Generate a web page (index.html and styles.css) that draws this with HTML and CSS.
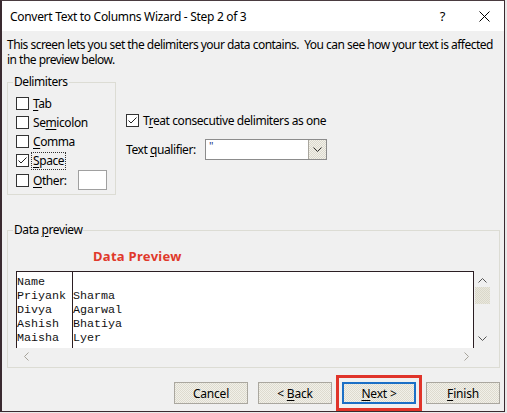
FILE: index.html
```html
<!DOCTYPE html>
<html>
<head>
<meta charset="utf-8">
<link rel="stylesheet" href="styles.css">
</head>
<body>
<div class="window">
  <div class="titlebar">
    <span class="title">Convert Text to Columns Wizard - Step 2 of 3</span>
    <span class="help">?</span>
    <svg class="close" width="11" height="11" viewBox="0 0 11 11"><path d="M0.5 0.5 L10.5 10.5 M10.5 0.5 L0.5 10.5" stroke="#000" stroke-width="1" fill="none"/></svg>
  </div>
  <div class="content">
    <div class="intro">
      <div>This screen lets you set the delimiters your data contains.&nbsp; You can see how your text is affected</div>
      <div>in the preview below.</div>
    </div>
    <div class="top-row">
      <fieldset class="group delims">
        <legend>Delimiters</legend>
        <div class="cb-row"><span class="box"></span><span><u>T</u>ab</span></div>
        <div class="cb-row"><span class="box"></span><span>Se<u>m</u>icolon</span></div>
        <div class="cb-row"><span class="box"></span><span><u>C</u>omma</span></div>
        <div class="cb-row"><span class="box"><svg width="11" height="11" viewBox="0 0 11 11"><path d="M1.5 5.5 L4 8 L9.5 2.5" stroke="#222" fill="none"/></svg></span><span class="focus"><u>S</u>pace</span></div>
        <div class="cb-row other"><span class="box"></span><span><u>O</u>ther:</span><span class="textbox"></span></div>
      </fieldset>
      <div class="options">
        <div class="cb-row"><span class="box"><svg width="11" height="11" viewBox="0 0 11 11"><path d="M1.5 5.5 L4 8 L9.5 2.5" stroke="#222" fill="none"/></svg></span><span>T<u>r</u>eat consecutive delimiters as one</span></div>
        <div class="qual-row">
          <span class="qual-label">Text <u>q</u>ualifier:</span>
          <div class="combo">
            <span class="combo-value">"</span>
            <span class="combo-btn"><svg width="9" height="5" viewBox="0 0 9 5"><path d="M0.5 0.5 L4.5 4.5 L8.5 0.5" stroke="#333" fill="none"/></svg></span>
          </div>
        </div>
      </div>
    </div>
    <fieldset class="group preview-group">
      <legend>Data <u>p</u>review</legend>
      <div class="annot">Data Preview</div>
      <div class="preview">
        <div class="preview-main">
          <div class="table">
            <div class="col c1"><div>Name</div><div>Priyank</div><div>Divya</div><div>Ashish</div><div>Maisha</div></div>
            <div class="col c2"><div>&nbsp;</div><div>Sharma</div><div>Agarwal</div><div>Bhatiya</div><div>Lyer</div></div>
          </div>
          <div class="vscroll">
            <svg class="arrow" width="9" height="5" viewBox="0 0 9 5"><path d="M0.5 4.5 L4.5 0.5 L8.5 4.5" stroke="#555" fill="none"/></svg>
            <div class="thumb"></div>
            <div class="spacer"></div>
            <svg class="arrow" width="9" height="5" viewBox="0 0 9 5"><path d="M0.5 0.5 L4.5 4.5 L8.5 0.5" stroke="#555" fill="none"/></svg>
          </div>
        </div>
        <div class="hscroll">
          <svg width="5" height="9" viewBox="0 0 5 9"><path d="M4.5 0.5 L0.5 4.5 L4.5 8.5" stroke="#a6a39a" fill="none"/></svg>
          <svg width="5" height="9" viewBox="0 0 5 9"><path d="M0.5 0.5 L4.5 4.5 L0.5 8.5" stroke="#a6a39a" fill="none"/></svg>
        </div>
      </div>
    </fieldset>
    <div class="buttons">
      <button class="btn">Cancel</button>
      <button class="btn">&lt; <u>B</u>ack</button>
      <button class="btn next"><u>N</u>ext &gt;</button>
      <button class="btn"><u>F</u>inish</button>
    </div>
  </div>
</div>
</body>
</html>
```

FILE: styles.css
```css
html, body {
  margin: 0;
  padding: 0;
  background: #e9e9e9;
}
body {
  font-family: "Noto Sans", "Open Sans", sans-serif;
  font-size: 12px;
  letter-spacing: -0.42px;
  color: #000;
}
.window {
  box-sizing: border-box;
  width: 505px;
  height: 412px;
  border-top: 1px solid #4a3b40;
  border-left: 2px solid #3a2a30;
  border-right: 1px solid #3a2a30;
  border-bottom: 1px solid #3a2a30;
  background: #f0f0f0;
  display: flex;
  flex-direction: column;
}
.titlebar {
  flex: none;
  height: 30px;
  background: #fff;
  display: flex;
  align-items: center;
  padding-left: 8px;
}
.title {
  flex: 1;
  font-size: 12px;
  letter-spacing: -0.3px;
  padding-top: 1px;
}
.help {
  font-size: 13px;
  margin-right: 34px;
}
.close {
  margin-right: 14px;
}
.content {
  flex: none;
  padding: 0 4px 0 5px;
  display: flex;
  flex-direction: column;
}
u {
  text-decoration-thickness: 1px;
  text-underline-offset: 2px;
}
.intro {
  margin-top: 6px;
  line-height: 15px;
  white-space: nowrap;
  letter-spacing: -0.52px;
}
.intro div {
  height: 15px;
}
.top-row {
  display: flex;
  margin-top: 7px;
}
.group {
  margin: 0;
  border: 1px solid #dcdcd4;
  padding: 0 8px;
  min-width: 0;
}
.group legend {
  padding: 0 1px;
  margin-left: -3px;
  line-height: 16px;
}
.delims {
  width: 109px;
  box-sizing: border-box;
  padding-top: 4px;
  padding-bottom: 4px;
}
.cb-row {
  height: 19px;
  display: flex;
  align-items: center;
  gap: 4px;
  white-space: nowrap;
}
.box {
  box-sizing: border-box;
  width: 13px;
  height: 13px;
  border: 1px solid #333;
  background: #fff;
  display: flex;
  align-items: center;
  justify-content: center;
  flex: none;
}
.focus {
  outline: 1px dotted #333;
  outline-offset: 1px;
  line-height: 14px;
}
.other {
  height: 20px;
}
.textbox {
  box-sizing: border-box;
  width: 30px;
  height: 20px;
  background: #fff;
  border: 1px solid #a0a0a0;
  margin-left: 7px;
}
.options {
  margin-left: 10px;
  padding-top: 37px;
  display: flex;
  flex-direction: column;
}
.qual-row {
  display: flex;
  align-items: center;
  margin-top: 9px;
}
.qual-label {
  width: 79px;
}
.combo {
  box-sizing: border-box;
  width: 122px;
  height: 21px;
  border: 1px solid #8c8c8c;
  background: #fff;
  display: flex;
}
.combo-value {
  flex: 1;
  color: #1d3a8a;
  padding-left: 3px;
  line-height: 11px;
  font-size: 11px;
}
.combo-btn {
  box-sizing: border-box;
  width: 18px;
  height: 19px;
  border-left: 1px solid #a9a69e;
  background: repeating-conic-gradient(#f2f1ea 0 25%, #dcd9cd 0 50%) 0 0 / 2px 2px;
  display: flex;
  align-items: center;
  justify-content: center;
}
.preview-group {
  margin-top: 27px;
  padding-bottom: 3px;
}
.annot {
  margin-top: 10px;
  margin-left: 77px;
  color: #e0392b;
  font-weight: bold;
  font-size: 13px;
  line-height: 16px;
  letter-spacing: 0.3px;
}
.preview {
  margin-top: 7px;
  display: flex;
  flex-direction: column;
}
.preview-main {
  display: flex;
  height: 77px;
}
.table {
  flex: 1;
  box-sizing: border-box;
  background: #fff;
  border: 1px solid #2b1e23;
  border-bottom: none;
  display: flex;
  font-family: "Liberation Mono", monospace;
  font-size: 11.7px;
  letter-spacing: 0;
  line-height: 14px;
  color: #111;
}
.col {
  padding-top: 3px;
  white-space: pre;
}
.c1 {
  width: 55px;
  border-right: 1px solid #2b1e23;
}
.c2 {
  flex: 1;
}
.vscroll {
  width: 17px;
  display: flex;
  flex-direction: column;
  align-items: center;
}
.vscroll .arrow {
  margin-top: 7px;
  flex: none;
}
.vscroll .arrow:last-child {
  margin-top: 0;
  margin-bottom: 7px;
}
.thumb {
  margin-top: 4px;
  width: 15px;
  height: 17px;
  background: repeating-conic-gradient(#e9e7dd 0 25%, #dad8ca 0 50%) 0 0 / 2px 2px;
}
.spacer {
  flex: 1;
}
.hscroll {
  height: 16px;
  display: flex;
  align-items: center;
  justify-content: space-between;
  padding: 0 22px 0 8px;
}
.buttons {
  display: flex;
  justify-content: flex-end;
  gap: 10px;
  margin-top: 14px;
}
.btn {
  position: relative;
  box-sizing: border-box;
  width: 74px;
  height: 22px;
  font-family: inherit;
  font-size: 12px;
  letter-spacing: -0.2px;
  color: #000;
  border: 1px solid #aaa79f;
  border-radius: 0;
  background: repeating-conic-gradient(#f1f0e9 0 25%, #dedbcf 0 50%) 0 0 / 2px 2px;
  padding: 0;
}
.next {
  border: 2px solid #1b6fc6;
}
.next::after {
  content: "";
  position: absolute;
  left: -8px;
  right: -8px;
  top: -9px;
  bottom: -9px;
  border: 3px solid #e0342a;
}
```
